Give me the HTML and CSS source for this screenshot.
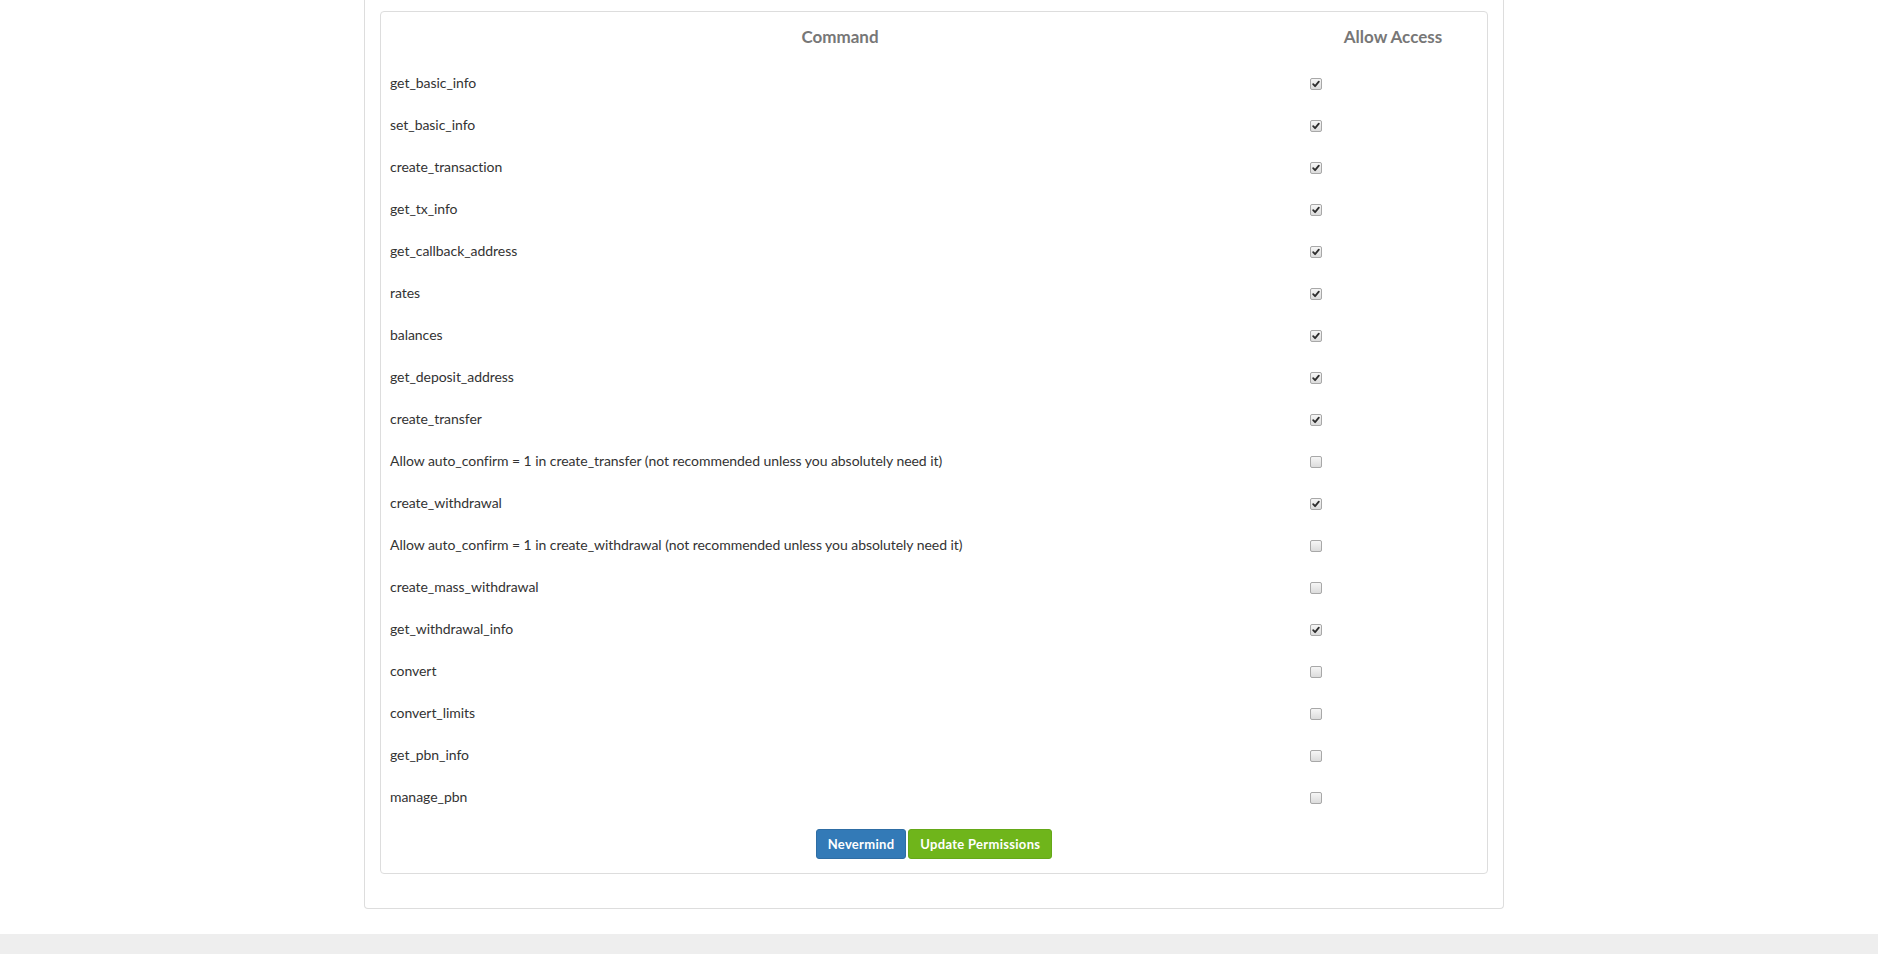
FILE: index.html
```html
<!DOCTYPE html>
<html lang="en">

<head>
    <meta charset="UTF-8">
    <title>API Key Permissions</title>
    <link rel="stylesheet" href="styles.css">
</head>

<body>
    <div class="outer">
        <form class="panel">
            <table class="perms">
                <thead>
                    <tr>
                        <th class="col-cmd">Command</th>
                        <th>Allow Access</th>
                    </tr>
                </thead>
                <tbody>
                    <tr><td>get_basic_info</td><td><span class="cb on"><svg viewBox="0 0 12 12"><path d="M2.6 6.2 L4.9 8.6 L9.4 3.2"/></svg></span></td></tr>
                    <tr><td>set_basic_info</td><td><span class="cb on"><svg viewBox="0 0 12 12"><path d="M2.6 6.2 L4.9 8.6 L9.4 3.2"/></svg></span></td></tr>
                    <tr><td>create_transaction</td><td><span class="cb on"><svg viewBox="0 0 12 12"><path d="M2.6 6.2 L4.9 8.6 L9.4 3.2"/></svg></span></td></tr>
                    <tr><td>get_tx_info</td><td><span class="cb on"><svg viewBox="0 0 12 12"><path d="M2.6 6.2 L4.9 8.6 L9.4 3.2"/></svg></span></td></tr>
                    <tr><td>get_callback_address</td><td><span class="cb on"><svg viewBox="0 0 12 12"><path d="M2.6 6.2 L4.9 8.6 L9.4 3.2"/></svg></span></td></tr>
                    <tr><td>rates</td><td><span class="cb on"><svg viewBox="0 0 12 12"><path d="M2.6 6.2 L4.9 8.6 L9.4 3.2"/></svg></span></td></tr>
                    <tr><td>balances</td><td><span class="cb on"><svg viewBox="0 0 12 12"><path d="M2.6 6.2 L4.9 8.6 L9.4 3.2"/></svg></span></td></tr>
                    <tr><td>get_deposit_address</td><td><span class="cb on"><svg viewBox="0 0 12 12"><path d="M2.6 6.2 L4.9 8.6 L9.4 3.2"/></svg></span></td></tr>
                    <tr><td>create_transfer</td><td><span class="cb on"><svg viewBox="0 0 12 12"><path d="M2.6 6.2 L4.9 8.6 L9.4 3.2"/></svg></span></td></tr>
                    <tr><td>Allow auto_confirm = 1 in create_transfer (not recommended unless you absolutely need it)</td><td><span class="cb"></span></td></tr>
                    <tr><td>create_withdrawal</td><td><span class="cb on"><svg viewBox="0 0 12 12"><path d="M2.6 6.2 L4.9 8.6 L9.4 3.2"/></svg></span></td></tr>
                    <tr><td>Allow auto_confirm = 1 in create_withdrawal (not recommended unless you absolutely need it)</td><td><span class="cb"></span></td></tr>
                    <tr><td>create_mass_withdrawal</td><td><span class="cb"></span></td></tr>
                    <tr><td>get_withdrawal_info</td><td><span class="cb on"><svg viewBox="0 0 12 12"><path d="M2.6 6.2 L4.9 8.6 L9.4 3.2"/></svg></span></td></tr>
                    <tr><td>convert</td><td><span class="cb"></span></td></tr>
                    <tr><td>convert_limits</td><td><span class="cb"></span></td></tr>
                    <tr><td>get_pbn_info</td><td><span class="cb"></span></td></tr>
                    <tr><td>manage_pbn</td><td><span class="cb"></span></td></tr>
                </tbody>
            </table>
            <div class="actions">
                <button type="button" class="btn btn-blue">Nevermind</button>
                <button type="submit" class="btn btn-green">Update Permissions</button>
            </div>
        </form>
    </div>

    <footer></footer>
</body>

</html>
```

FILE: styles.css
```css
body {
    margin: 0;
    padding: 0;
    background-color: #fff;
    font-family: Lato, "Open Sans", Arial, sans-serif;
    color: #333;
}

.outer {
    box-sizing: border-box;
    width: 1140px;
    margin-left: calc(50% - 575px);
    padding: 11px 15px 34px;
    border: 1px solid #ddd;
    border-top: 0;
    border-radius: 0 0 4px 4px;
}

.panel {
    border: 1px solid #ddd;
    border-radius: 4px;
    padding-bottom: 14px;
    margin: 0;
}

.perms {
    width: 100%;
    border-collapse: collapse;
}

.perms th {
    padding: 13px 8px;
    line-height: 24px;
    font-size: 17px;
    font-weight: bold;
    color: #777;
    text-align: center;
}

.perms .col-cmd {
    width: 902px;
}

.perms td {
    padding: 10px 8px 10px 9px;
    line-height: 22px;
    font-size: 14px;
    letter-spacing: -0.05px;
    color: #333;
    vertical-align: middle;
}

.perms td + td {
    padding-left: 8px;
}

.cb {
    display: inline-block;
    box-sizing: border-box;
    width: 12px;
    height: 12px;
    margin-left: 3px;
    vertical-align: middle;
    border: 1px solid #a8a8a8;
    border-radius: 2px;
    background: linear-gradient(#f6f6f6, #dcdcdc);
}

.cb svg {
    display: block;
    width: 10px;
    height: 10px;
}

.cb svg path {
    fill: none;
    stroke: #2e2e2e;
    stroke-width: 2.2;
    stroke-linecap: round;
    stroke-linejoin: round;
}

.actions {
    display: flex;
    justify-content: center;
    gap: 2px;
    padding-top: 11px;
}

.btn {
    height: 30px;
    padding: 0 11px;
    border: 1px solid transparent;
    border-radius: 3px;
    font-family: Lato, Arial, sans-serif;
    font-size: 13px;
    font-weight: bold;
    letter-spacing: 0.3px;
    color: #fff;
    cursor: pointer;
}

.btn-blue {
    background-color: #337ab7;
    border-color: #2e6da4;
}

.btn-green {
    background-color: #6fb51b;
    border-color: #65a818;
}

footer {
    margin-top: 25px;
    height: 21px;
    background-color: #eee;
}
```
